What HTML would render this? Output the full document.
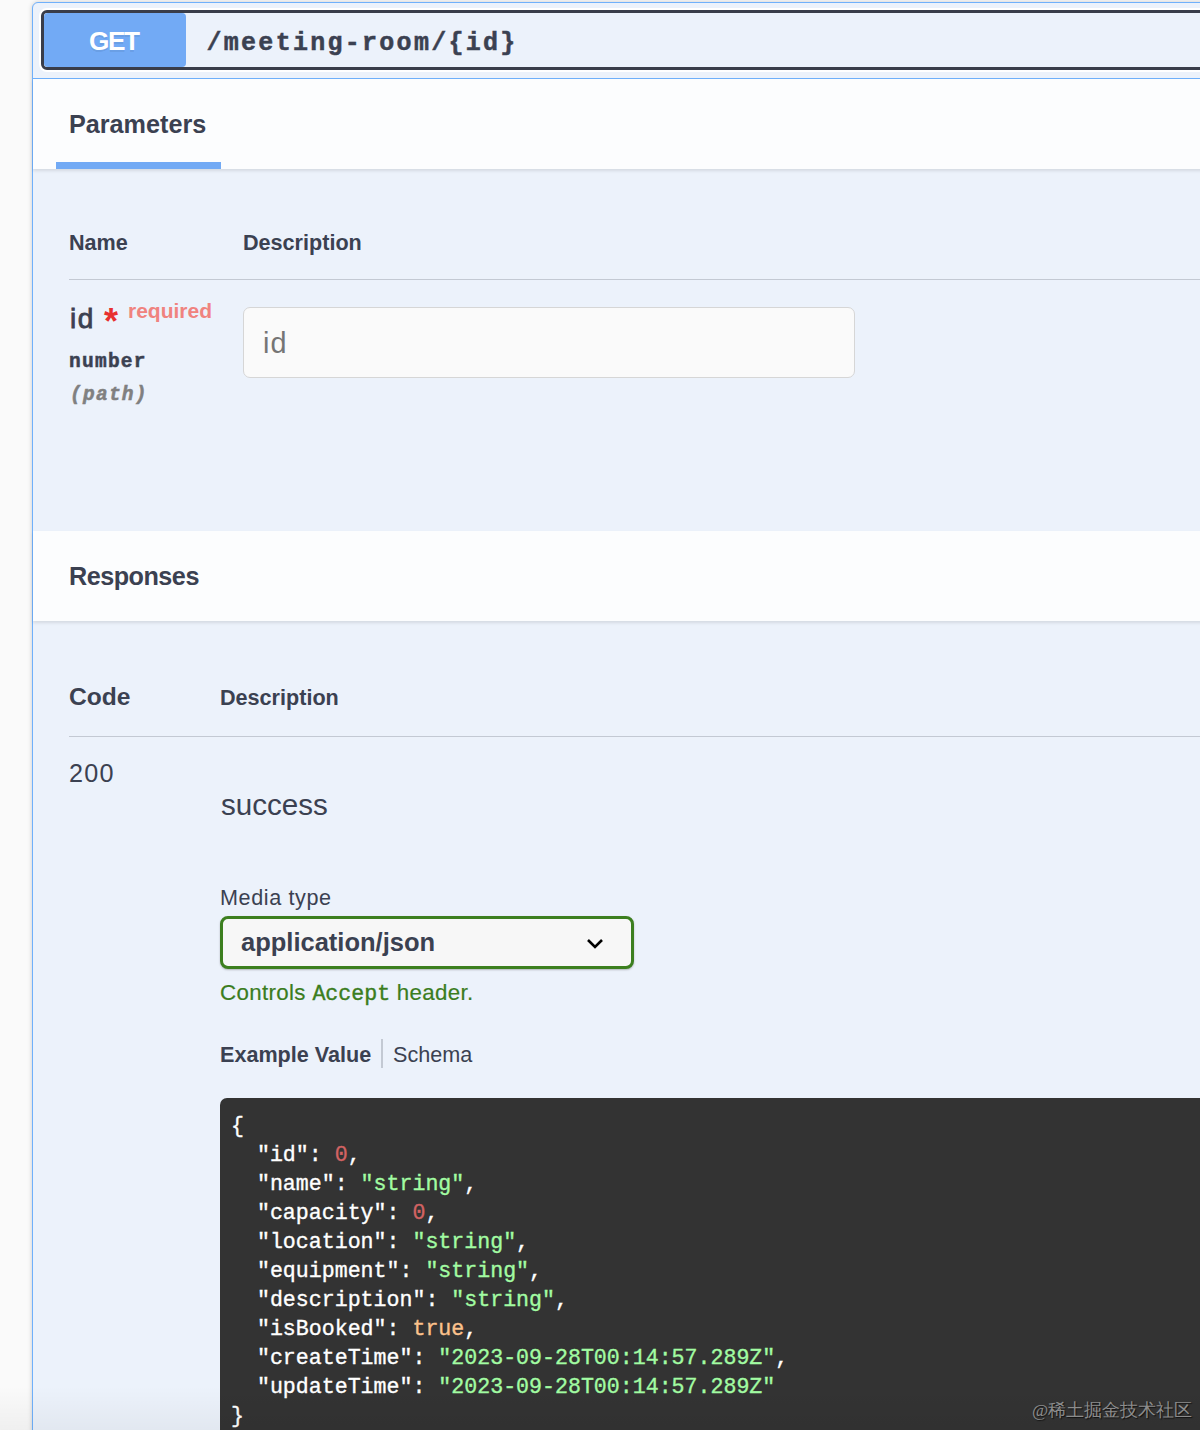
<!DOCTYPE html>
<html><head><meta charset="utf-8">
<style>
html,body{margin:0;padding:0;}
body{width:1200px;height:1430px;overflow:hidden;position:relative;background:#fafafa;font-family:"Liberation Sans",sans-serif;color:#3b4151;}
.a{position:absolute;white-space:pre;line-height:1;}
.mono{font-family:"Liberation Mono",monospace;}
#op{position:absolute;left:32px;top:2px;width:1200px;height:1500px;border:1px solid #6fb0fb;border-radius:6px;background:#ecf2fb;box-shadow:0 0 5px rgba(0,0,0,.19);}
#sum{position:absolute;left:41px;top:10px;width:1200px;height:54px;border:3px solid #393d4a;border-radius:6px;box-shadow:0 0 0 2px #fff;}
#badge{position:absolute;left:44px;top:13px;width:142px;height:54px;background:#72aaf5;border-radius:4px;}
#sumline{position:absolute;left:33px;top:78px;width:1200px;height:1px;background:#6fb0fb;}
.hdr{position:absolute;left:33px;width:1200px;background:#fcfdfe;box-shadow:0 2px 3px rgba(0,0,0,.1);}
</style></head><body>
<div id="op"></div>
<div id="sum"></div>
<div id="badge"></div>
<div class="a" style="left:89px;top:28px;font-size:26.2px;letter-spacing:-1.4px;font-weight:bold;color:#fff;text-shadow:0 2px 0 rgba(0,0,0,.08);">GET</div>
<div class="a mono" style="left:206.5px;top:31px;font-size:25px;letter-spacing:2.28px;font-weight:bold;-webkit-text-stroke:0.5px currentColor;">/meeting-room/{id}</div>
<div id="sumline"></div>

<div class="hdr" style="top:79px;height:90px;"></div>
<div class="a" style="left:69px;top:112px;font-size:25.2px;font-weight:bold;">Parameters</div>
<div style="position:absolute;left:56px;top:162px;width:164.5px;height:7px;background:#72aaf5;"></div>

<div class="a" style="left:69px;top:232px;font-size:21.6px;font-weight:bold;">Name</div>
<div class="a" style="left:243px;top:232px;font-size:21.6px;font-weight:bold;">Description</div>
<div style="position:absolute;left:69px;top:279px;width:1200px;height:1px;background:#c3c9d3;"></div>

<div class="a" style="left:70px;top:305px;font-size:28px;letter-spacing:1.6px;-webkit-text-stroke:0.8px currentColor;">id</div>
<div class="a" style="left:104px;top:303.5px;font-size:36px;font-weight:bold;color:#e8302f;">*</div>
<div class="a" style="left:128px;top:300px;font-size:21px;font-weight:bold;color:#f0837f;">required</div>
<div class="a mono" style="left:69px;top:353px;font-size:19.5px;letter-spacing:1.26px;font-weight:bold;-webkit-text-stroke:0.5px currentColor;">number</div>
<div class="a mono" style="left:70px;top:386px;font-size:19.5px;letter-spacing:1.26px;font-weight:bold;font-style:italic;color:#808080;-webkit-text-stroke:0.5px currentColor;">(path)</div>
<div style="position:absolute;left:243px;top:307px;width:610px;height:69px;border:1px solid #d6d6d6;border-radius:7px;background:#fafafa;"></div>
<div class="a" style="left:263px;top:329px;font-size:28.8px;letter-spacing:1px;color:#757575;">id</div>

<div class="hdr" style="top:531px;height:90px;"></div>
<div class="a" style="left:69px;top:564px;font-size:25.2px;letter-spacing:-0.5px;font-weight:bold;">Responses</div>

<div class="a" style="left:69px;top:684.5px;font-size:24.6px;font-weight:bold;">Code</div>
<div class="a" style="left:220px;top:687px;font-size:21.6px;font-weight:bold;">Description</div>
<div style="position:absolute;left:69px;top:736px;width:1200px;height:1px;background:#c3c9d3;"></div>
<div class="a" style="left:69px;top:761px;font-size:25.2px;letter-spacing:1.3px;">200</div>
<div class="a" style="left:221px;top:789.5px;font-size:29.6px;">success</div>

<div class="a" style="left:220px;top:887px;font-size:21.6px;letter-spacing:0.6px;">Media type</div>
<div style="position:absolute;left:220px;top:916px;width:408px;height:47px;border:3px solid #3c7f1f;border-radius:8px;background:#f7f7f7;box-shadow:0 1px 2px rgba(0,0,0,.25);"></div>
<div class="a" style="left:241px;top:930px;font-size:25.5px;font-weight:bold;">application/json</div>
<svg style="position:absolute;left:585px;top:936.5px;" width="20" height="14" viewBox="0 0 20 14"><path d="M3 3 L10 10 L17 3" fill="none" stroke="#000" stroke-width="2.6"/></svg>

<div class="a" style="left:220px;top:981.5px;font-size:22.3px;letter-spacing:0.35px;color:#3b7d1e;-webkit-text-stroke:0.2px currentColor;">Controls <span class="mono" style="font-size:21.6px;letter-spacing:0;-webkit-text-stroke:0.4px currentColor;">Accept</span> header.</div>
<div class="a" style="left:220px;top:1044px;font-size:21.6px;font-weight:bold;">Example Value</div>
<div style="position:absolute;left:381px;top:1039px;width:2px;height:29px;background:#c3c9d3;"></div>
<div class="a" style="left:393px;top:1044px;font-size:21.6px;">Schema</div>

<div style="position:absolute;left:220px;top:1098px;width:1100px;height:400px;background:#333;border-radius:7px;"></div>
<div class="a mono" style="left:231px;top:1112px;font-size:21.6px;line-height:29px;color:#fff;-webkit-text-stroke:0.35px currentColor;">{
  "id": <span style="color:#d36363">0</span>,
  "name": <span style="color:#a2fca2">"string"</span>,
  "capacity": <span style="color:#d36363">0</span>,
  "location": <span style="color:#a2fca2">"string"</span>,
  "equipment": <span style="color:#a2fca2">"string"</span>,
  "description": <span style="color:#a2fca2">"string"</span>,
  "isBooked": <span style="color:#fcc28c">true</span>,
  "createTime": <span style="color:#a2fca2">"2023-09-28T00:14:57.289Z"</span>,
  "updateTime": <span style="color:#a2fca2">"2023-09-28T00:14:57.289Z"</span>
}</div>
<div style="position:absolute;left:0;top:1386px;width:1200px;height:44px;background:linear-gradient(rgba(0,0,0,0),rgba(0,0,0,.045));"></div>
<div class="a" style="left:1032px;top:1402px;font-family:'Liberation Serif',serif;font-size:17.6px;color:#8c8c8c;text-shadow:1px 1px 1px #111;">@稀土掘金技术社区</div>
</body></html>
